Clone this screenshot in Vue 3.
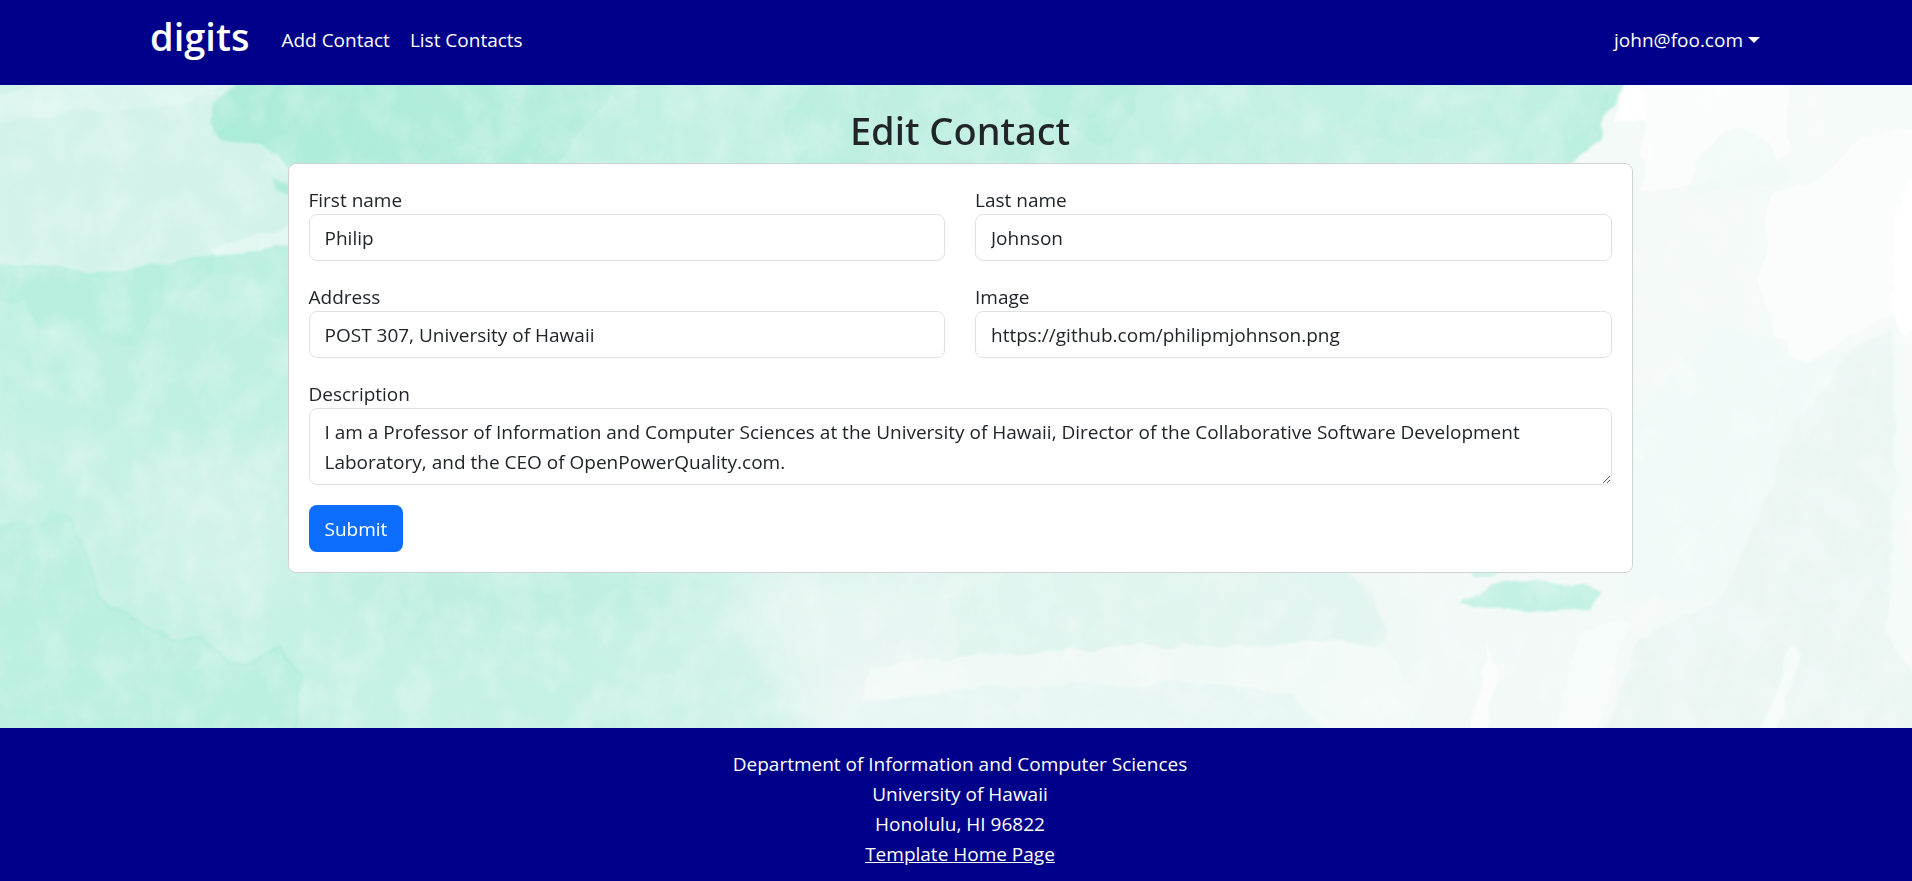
<script setup>
import { ref } from 'vue'

const contact = ref({
  firstName: 'Philip',
  lastName: 'Johnson',
  address: 'POST 307, University of Hawaii',
  image: 'https://github.com/philipmjohnson.png',
  description:
    'I am a Professor of Information and Computer Sciences at the University of Hawaii, Director of the Collaborative Software Development Laboratory, and the CEO of OpenPowerQuality.com.',
})

const fields = [
  { key: 'firstName', label: 'First name' },
  { key: 'lastName', label: 'Last name' },
  { key: 'address', label: 'Address' },
  { key: 'image', label: 'Image' },
]
</script>

<template>
  <div class="page">
    <header class="navbar">
      <nav class="container nav">
        <a class="brand" href="#">digits</a>
        <a class="nav-link" href="#add">Add Contact</a>
        <a class="nav-link" href="#list">List Contacts</a>
        <button class="user" type="button">john@foo.com<span class="caret"></span></button>
      </nav>
    </header>

    <main class="main">
      <svg class="wash" viewBox="0 85 1912 643" preserveAspectRatio="xMidYMid slice" aria-hidden="true">
        <defs>
          <linearGradient id="base" x1="0" x2="1" y1="0" y2="0">
            <stop offset="0" stop-color="#c6f1e6" />
            <stop offset="0.3" stop-color="#c6f1e6" />
            <stop offset="0.45" stop-color="#d8f4ec" />
            <stop offset="0.6" stop-color="#e2f5f0" />
            <stop offset="0.75" stop-color="#f2f9f7" />
            <stop offset="1" stop-color="#f5fbf9" />
          </linearGradient>
          <linearGradient id="stroke" x1="0" x2="1" y1="0" y2="0">
            <stop offset="0" stop-color="#acecda" />
            <stop offset="0.25" stop-color="#b4eddd" />
            <stop offset="0.45" stop-color="#bdefe1" />
            <stop offset="0.9" stop-color="#c8f1e6" />
            <stop offset="1" stop-color="#b5eede" />
          </linearGradient>
          <linearGradient id="drip" x1="0" x2="0" y1="0" y2="1">
            <stop offset="0" stop-color="#b5eede" />
            <stop offset="1" stop-color="#b9efe0" />
          </linearGradient>
          <filter id="rough" x="-5%" y="-5%" width="110%" height="110%" color-interpolation-filters="sRGB">
            <feTurbulence type="fractalNoise" baseFrequency="0.03" numOctaves="3" seed="4" />
            <feDisplacementMap in="SourceGraphic" scale="14" xChannelSelector="R" yChannelSelector="G" />
            <feGaussianBlur stdDeviation="1" />
          </filter>
          <filter id="soft" x="-20%" y="-20%" width="140%" height="140%">
            <feGaussianBlur stdDeviation="20" />
          </filter>
          <filter id="paper" x="0" y="0" width="100%" height="100%">
            <feTurbulence type="fractalNoise" baseFrequency="0.03 0.025" numOctaves="5" seed="9" />
            <feColorMatrix values="0 0 0 0 1  0 0 0 0 1  0 0 0 0 1  1.6 0 0 0 -0.6" />
          </filter>
        </defs>

        <rect y="85" width="1912" height="643" fill="url(#base)" />

        <g filter="url(#soft)">
          <path d="M740 570L980 570 960 728 800 728 790 670 760 640Z" fill="#e6f6f2" />
          <path d="M870 665L960 655 960 740 800 740Z" fill="#eff8f6" />
          <path d="M0 300L290 270 290 480 150 440 0 400Z" fill="#c0f0e4" />
          <path d="M130 470L290 440 290 590 180 610Z" fill="#d2f3ea" />
          <path d="M300 575L720 575 640 615 400 625Z" fill="#bdeee1" />
        </g>

        <g filter="url(#rough)">
          <path d="M-20 70H260L215 110 215 135 270 145 295 165 295 240 210 254 150 268 95 272 30 264-20 267Z" fill="#d3f3ea" />
          <path d="M-20 125L80 112 180 104 250 78-20 78Z" fill="#e2f7f1" opacity="0.5" />
          <path d="M-20 70H80L-20 102Z" fill="#c5f0e5" opacity="0.6" />
          <path d="M-20 265L30 264 95 272 150 268 215 254 Q214 275 195 292Q186 294 180 288Q160 298 143 338Q134 348 125 347Q114 347 107 344Q95 335 82 318L40 327Q34 318 25 300L-20 300Z" fill="url(#drip)" opacity="0.9" />
          <path d="M215 255L295 242V340L265 330 255 278 212 272Z" fill="#bbefe1" />
          <path d="M213 249L285 228 300 224V243L216 256Z" fill="#e2f7f1" />
          <path d="M246 70L215 105 210 123 222 141 255 142 282 154 292 168H1560L1582 157 1603 140 1602 124 1616 106 1629 70Z" fill="url(#stroke)" />
          <path d="M620 70L608 105 575 135 555 170H800L785 120 820 70Z" fill="#c9f1e6" opacity="0.6" />
          <path d="M1010 70Q1018 102 1040 115Q1065 118 1080 134Q1095 148 1115 140Q1130 124 1145 70Z" fill="#b3eddd" opacity="0.65" />
          <path d="M1260 70L1300 115 1400 145 1480 130 1560 145 1600 115 1610 70Z" fill="#bff0e3" opacity="0.6" />
          <path d="M295 185L272 179 276 190 295 196Z" fill="#b0ecdc" />
          <path d="M-20 525L40 522 55 510 72 520 85 550 98 597 140 622 177 642 204 637 225 662 246 666 277 650 299 677 294 745H-20Z" fill="#b9eee0" opacity="0.85" />
          <path d="M72 520L85 550 98 597 140 622 177 642 204 637 225 662 246 666 277 650 299 677 294 745" fill="none" stroke="#aeecdb" stroke-width="3" opacity="0.8" />

          <path d="M950 560H1335L1375 595 1392 632 1382 643 1150 645 956 655Z" fill="#e0f4ef" opacity="0.85" />
          <path d="M870 668L956 654 1150 646 1385 643 1420 700 1410 745H850Z" fill="#f4faf8" opacity="0.8" />
          <path d="M850 704L956 690 1120 684 1200 682 1290 695 1340 740H840Z" fill="#e7f6f3" opacity="0.9" />
          <path d="M1456 604L1475 594 1492 586 1541 582 1584 583 1599 592 1590 610 1553 612 1492 608 1475 605Z" fill="#c3f1e4" />
          <path d="M1468 572L1500 571 1490 577 1474 577Z" fill="#cdf2e9" />
          <path d="M1633 459L1640 458 1644 463 1635 465Z" fill="#c9f2e7" />

          <path d="M1629 78L1613 122 1655 122 1640 78Z" fill="#ffffff" />
          <path d="M1646 78H1790V150L1740 180 1640 190 1645 150Z" fill="#fbfdfc" />
          <path d="M1700 150L1735 125 1770 145 1790 180 1690 195Z" fill="#f0f9f6" opacity="0.7" />
          <path d="M1932 120L1860 140 1815 185 1773 188 1760 282 1773 337 1807 364 1833 345 1893 316 1932 300Z" fill="#fafdfc" />
          <path d="M1625 440L1653 396 1687 358 1720 328 1765 335 1807 364 1850 350 1790 433 1760 513 1720 598 1625 600Z" fill="#f1f9f7" opacity="0.9" />
          <path d="M1893 328L1850 350 1790 433 1760 513 1720 598 1640 640 1600 745H1932V700L1885 630 1893 500Z" fill="#ebf6f3" opacity="0.9" />
          <path d="M1790 645L1802 655 1770 745H1757Z" fill="#f7fcfa" opacity="0.8" />
          <path d="M1490 640L1497 668 1482 745H1466Z" fill="#ffffff" opacity="0.6" />
          <path d="M1893 220L1912 180 1925 320 1902 336 1893 310Z" fill="#ffffff" />
          <path d="M1580 630L1630 620 1610 690 1590 745H1550Z" fill="#f6fcfa" />
        </g>
        <rect class="grain" y="85" width="1912" height="643" filter="url(#paper)" />
      </svg>

      <section class="content">
        <h2 class="title">Edit Contact</h2>
        <form class="card" @submit.prevent>
          <div class="grid">
            <div v-for="field in fields" :key="field.key" class="field">
              <label :for="field.key">{{ field.label }}</label>
              <input :id="field.key" v-model="contact[field.key]" class="control" type="text" />
            </div>
          </div>
          <div class="field">
            <label for="description">Description</label>
            <textarea id="description" v-model="contact.description" class="control" rows="2"></textarea>
          </div>
          <button class="submit" type="submit">Submit</button>
        </form>
      </section>
    </main>

    <footer class="footer">
      <div>Department of Information and Computer Sciences</div>
      <div>University of Hawaii</div>
      <div>Honolulu, HI 96822</div>
      <a href="#template">Template Home Page</a>
    </footer>
  </div>
</template>

<style>
body {
  margin: 0;
}
</style>

<style scoped>
.page {
  box-sizing: border-box;
  display: flex;
  flex-direction: column;
  min-height: 100vh;
  font-family: "Segoe UI", "Open Sans", "Noto Sans", sans-serif;
  font-size: 19px;
  line-height: 30px;
  color: #212529;
}
.navbar,
.footer {
  background: #00008b;
  color: #fff;
}
.navbar,
.content,
.footer {
  padding-left: 8px;
}
.container {
  box-sizing: border-box;
  max-width: 1650px;
  margin: 0 auto;
  padding: 0 15px;
}
.nav {
  display: flex;
  align-items: center;
  height: 85px;
  padding-bottom: 5px;
}
.nav a {
  color: #fff;
  text-decoration: none;
}
.nav .brand {
  margin-right: 22px;
  padding-bottom: 8px;
  font-size: 38px;
  font-weight: 600;
  line-height: 60px;
}
.nav-link {
  padding: 10px;
}
.user {
  display: flex;
  align-items: center;
  gap: 5px;
  margin-left: auto;
  padding: 10px;
  border: 0;
  background: none;
  color: #fff;
  font: inherit;
}
.caret {
  border: 6px solid transparent;
  border-top-color: #fff;
  border-bottom: 0;
}
.main {
  position: relative;
  flex: 1;
  overflow: hidden;
}
.wash {
  position: absolute;
  inset: 0;
  width: 100%;
  height: 100%;
}
.grain {
  opacity: 0.35;
}
.content {
  position: relative;
  max-width: 1345px;
  margin: 0 auto;
  padding-top: 20px;
}
.title {
  margin: 0 0 8px;
  font-family: "Segoe UI", "Noto Sans", sans-serif;
  font-size: 38px;
  font-weight: 500;
  line-height: 50px;
  text-align: center;
}
.card {
  padding: 20px;
  border: 1px solid #d0d3d3;
  border-radius: 8px;
  background: #fff;
}
.grid {
  display: grid;
  grid-template-columns: 1fr 1fr;
  column-gap: 30px;
}
.field {
  display: flex;
  flex-direction: column;
  margin-bottom: 20px;
}
label {
  padding-top: 2px;
  line-height: 28px;
}
.control {
  box-sizing: border-box;
  width: 100%;
  height: 47px;
  margin: 0;
  padding: 7px 15px;
  border: 1px solid #dee2e6;
  border-radius: 8px;
  background: #fff;
  color: #212529;
  font: inherit;
}
textarea.control {
  height: 77px;
  padding-top: 8px;
  resize: vertical;
}
.submit {
  display: block;
  height: 47px;
  padding: 0 16px;
  border: 0;
  border-radius: 8px;
  background: #0d6efd;
  color: #fff;
  font: inherit;
}
.footer {
  padding-top: 21px;
  padding-bottom: 12px;
  text-align: center;
}
.footer a {
  color: #fff;
}
</style>
